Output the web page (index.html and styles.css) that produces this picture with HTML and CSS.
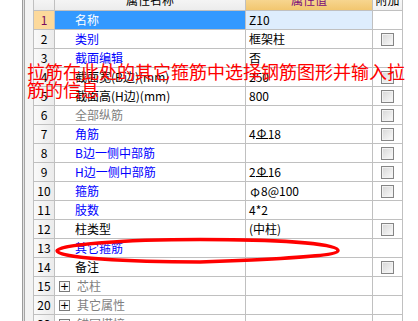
FILE: index.html
```html
<!DOCTYPE html>
<html lang="zh-CN">
<head>
<meta charset="utf-8">
<title>属性编辑</title>
<link rel="stylesheet" href="styles.css">
</head>
<body>
<div class="screen">
  <div class="side">
    <div class="pane"></div>
    <div class="split"></div>
    <div class="gutter"></div>
  </div>
  <div class="grid">
    <div class="h num"></div><div class="h name">属性名称</div><div class="h val">属性值</div><div class="h add">附加</div>

    <div class="c num sel">1</div><div class="c name cur">名称</div><div class="c val cur-val">Z10</div><div class="c add"></div>
    <div class="c num">2</div><div class="c name blue">类别</div><div class="c val">框架柱</div><div class="c add"><span class="cb"></span></div>
    <div class="c num">3</div><div class="c name blue">截面编辑</div><div class="c val">否</div><div class="c add"></div>
    <div class="c num">4</div><div class="c name">截面宽(B边)(mm)</div><div class="c val">250</div><div class="c add"><span class="cb"></span></div>
    <div class="c num">5</div><div class="c name">截面高(H边)(mm)</div><div class="c val">800</div><div class="c add"><span class="cb"></span></div>
    <div class="c num">6</div><div class="c name grey">全部纵筋</div><div class="c val"></div><div class="c add"><span class="cb"></span></div>
    <div class="c num">7</div><div class="c name blue">角筋</div><div class="c val">4<span class="bar g2">Φ</span>18</div><div class="c add"><span class="cb"></span></div>
    <div class="c num">8</div><div class="c name blue">B边一侧中部筋</div><div class="c val"></div><div class="c add"><span class="cb"></span></div>
    <div class="c num">9</div><div class="c name blue">H边一侧中部筋</div><div class="c val">2<span class="bar g2">Φ</span>16</div><div class="c add"><span class="cb"></span></div>
    <div class="c num">10</div><div class="c name blue">箍筋</div><div class="c val"><span class="bar">Φ</span>8@100</div><div class="c add"><span class="cb"></span></div>
    <div class="c num">11</div><div class="c name blue">肢数</div><div class="c val">4*2</div><div class="c add"></div>
    <div class="c num">12</div><div class="c name">柱类型</div><div class="c val">(中柱)</div><div class="c add"><span class="cb"></span></div>
    <div class="c num">13</div><div class="c name blue">其它箍筋</div><div class="c val"></div><div class="c add"></div>
    <div class="c num">14</div><div class="c name">备注</div><div class="c val"></div><div class="c add"><span class="cb"></span></div>
    <div class="c num">15</div><div class="c name grey group"><span class="plus">+</span>芯柱</div><div class="c val"></div><div class="c add"></div>
    <div class="c num">20</div><div class="c name grey group"><span class="plus">+</span>其它属性</div><div class="c val"></div><div class="c add"></div>
    <div class="c num">33</div><div class="c name grey group"><span class="plus">+</span>锚固搭接</div><div class="c val"></div><div class="c add"></div>
  </div>

  <div class="note">拉筋在此处的其它箍筋中选择钢筋图形并输入拉<br>筋的信息</div>

  <svg class="mark" width="418" height="321" viewBox="0 0 418 321">
    <path d="M200 239.5 C272 239.5 338 243 338 250.5 C338 255 300 257.5 252 260 L200 262 C128 262 57 258 57 250.7 C57 245 120 239.5 200 239.5 Z" fill="none" stroke="#ff0000" stroke-width="3.5"/>
  </svg>
</div>
</body>
</html>
```

FILE: styles.css
```css
html, body {
  margin: 0;
  padding: 0;
  background: #ffffff;
}

.screen {
  position: relative;
  width: 418px;
  height: 321px;
  overflow: hidden;
  display: flex;
  align-items: flex-start;
  font-family: "Noto Sans CJK SC", "Noto Sans", sans-serif;
  font-size: 12px;
  color: #000;
}

.side {
  display: flex;
  height: 321px;
  flex: none;
}

.pane {
  width: 22px;
  background: #ffffff;
}

.split {
  width: 3px;
  box-sizing: border-box;
  border-left: 1px solid #9c9c9c;
  border-right: 1px solid #a6a6a6;
  background: #e2e2e2;
}

.gutter {
  width: 8px;
  background: #f3f3f3;
}

.grid {
  display: grid;
  grid-template-columns: 21px 191px 127px 30px;
  grid-auto-rows: 19px;
  margin-top: -8px;
  border-left: 1px solid #c0c0c0;
  flex: none;
}

.h, .c {
  box-sizing: border-box;
  border-right: 1px solid #c0c0c0;
  border-bottom: 1px solid #c0c0c0;
  display: flex;
  align-items: center;
  white-space: nowrap;
  overflow: hidden;
  line-height: 12px;
}

.h {
  justify-content: center;
  padding-bottom: 3px;
  background: linear-gradient(#fbfbfb, #ececec);
}

.h.val {
  background: linear-gradient(#fbe2a9, #f2c66f);
  color: #7a0a7a;
}

.h.add {
  background: linear-gradient(#fdfdfd, #f1f1f1);
}

.c.num {
  justify-content: center;
  background: linear-gradient(to right, #fafafa, #ebebeb);
}

.c.num.sel {
  background: #fcd99b;
  color: #7a0a5e;
}

.c.name {
  padding-left: 20px;
}

.c.name.group {
  padding-left: 4px;
}

.c.val {
  padding-left: 3px;
}

.c.add {
  justify-content: center;
}

.cur {
  background: #3399ff;
  color: #ffffff;
}

.cur-val {
  background: #deedfd;
}

.blue {
  color: #0000ff;
}

.grey {
  color: #7f7f7f;
}

.bar {
  display: inline-block;
  width: 12px;
  text-align: center;
  line-height: 11px;
}

.bar.g2 {
  border-bottom: 1px solid #000;
  height: 10px;
  line-height: 10px;
  margin-bottom: 1px;
}

.plus {
  box-sizing: border-box;
  width: 11px;
  height: 11px;
  margin-right: 7px;
  border: 1px solid #7a7a7a;
  background: linear-gradient(135deg, #f4f4f4, #ffffff);
  color: #000;
  font-family: "DejaVu Sans", sans-serif;
  font-size: 11px;
  line-height: 9px;
  display: flex;
  align-items: center;
  justify-content: center;
}

.cb {
  box-sizing: border-box;
  width: 13px;
  height: 13px;
  border: 1px solid #858585;
  box-shadow: inset 0 0 0 1px #f2f2f2;
  background: linear-gradient(135deg, #d6d6d6, #fbfbfb);
}

.note {
  position: absolute;
  left: 27px;
  top: 62px;
  font-size: 18px;
  line-height: 18px;
  color: #ff0000;
  white-space: nowrap;
}

.mark {
  position: absolute;
  left: 0;
  top: 0;
  pointer-events: none;
}
```
